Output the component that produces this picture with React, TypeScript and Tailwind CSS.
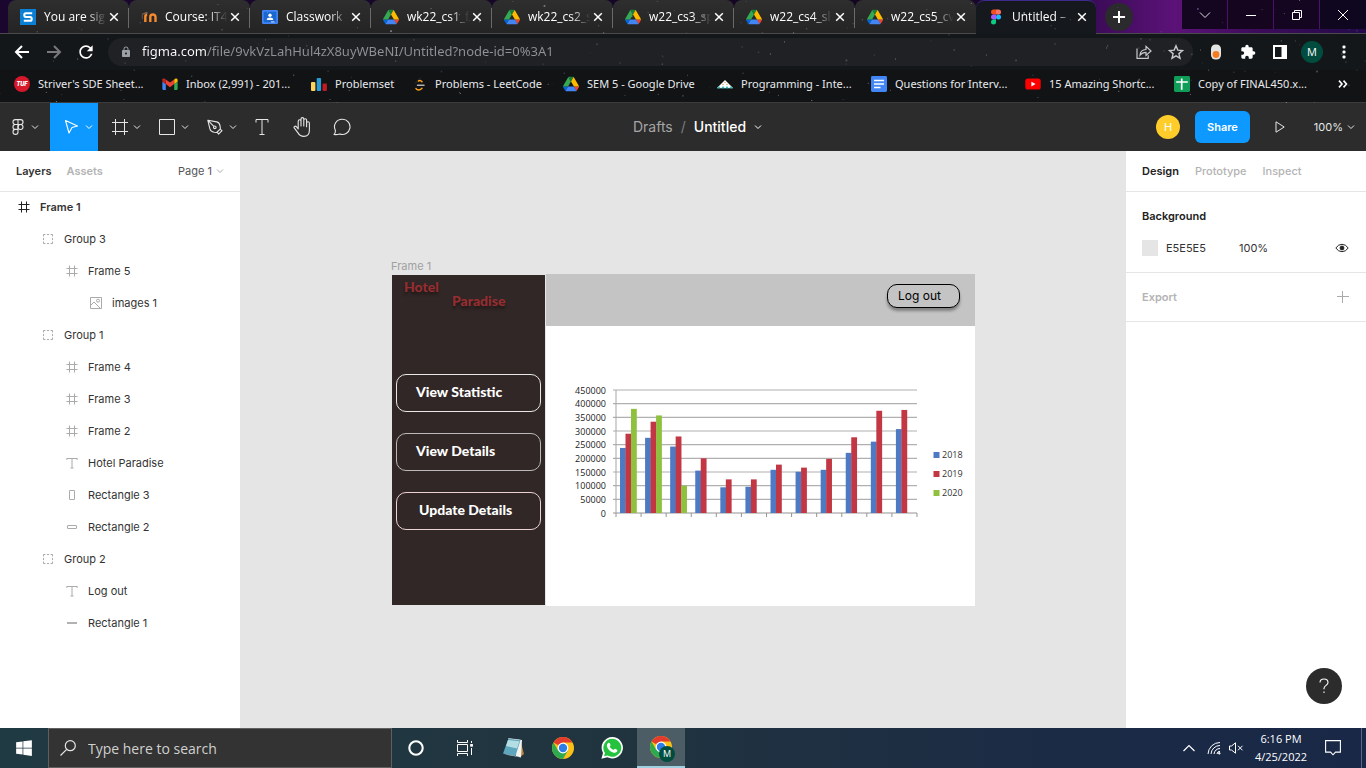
import React from "react";
import { MdExtension, MdLock, MdRefresh } from "react-icons/md";
import { FaWindows } from "react-icons/fa";

type IconProps = { className?: string };

/* ---------- Brand icons ---------- */

function DriveIcon({ className = "h-4 w-4" }: IconProps) {
  return (
    <svg viewBox="0 -4 87.3 86" className={className} aria-hidden="true">
      <path d="m6.6 66.85 3.85 6.65c.8 1.4 1.95 2.5 3.3 3.3l13.75-23.8h-27.5c0 1.55.4 3.1 1.2 4.5z" fill="#0066da" />
      <path d="m43.65 25-13.75-23.8c-1.35.8-2.5 1.9-3.3 3.3l-25.4 44a9.06 9.06 0 0 0-1.2 4.5h27.5z" fill="#34a853" />
      <path d="m73.55 76.8c1.35-.8 2.5-1.9 3.3-3.3l1.6-2.75 7.65-13.25c.8-1.4 1.2-2.95 1.2-4.5h-27.5l5.85 11.5z" fill="#ea4335" />
      <path d="m43.65 25 13.75-23.8c-1.35-.8-2.9-1.2-4.5-1.2h-18.5c-1.6 0-3.15.45-4.5 1.2z" fill="#188038" />
      <path d="m59.8 53h-32.3l-13.75 23.8c1.35.8 2.9 1.2 4.5 1.2h50.8c1.6 0 3.15-.45 4.5-1.2z" fill="#4285f4" />
      <path d="m73.4 26.5-12.7-22c-.8-1.4-1.95-2.5-3.3-3.3l-13.75 23.8 16.15 28h27.45c0-1.55-.4-3.1-1.2-4.5z" fill="#ffba00" />
    </svg>
  );
}

function GmailIcon() {
  return (
    <svg viewBox="50 28 92 92" className="h-4 w-4" aria-hidden="true">
      <path fill="#4285f4" d="M58 108h14V74L52 59v43c0 3.32 2.69 6 6 6" />
      <path fill="#34a853" d="M120 108h14c3.32 0 6-2.69 6-6V59l-20 15" />
      <path fill="#fbbc04" d="M120 48v26l20-15v-8c0-7.42-8.47-11.65-14.4-7.2" />
      <path fill="#ea4335" d="M72 74V48l24 18 24-18v26L96 92" />
      <path fill="#c5221f" d="M52 51v8l20 15V48l-5.6-4.2c-5.94-4.45-14.4-.22-14.4 7.2" />
    </svg>
  );
}

function SquareSIcon() {
  return (
    <svg viewBox="0 0 16 16" className="h-4 w-4" aria-hidden="true">
      <rect width="16" height="16" fill="#0a7fd4" />
      <path d="M12.2 4.2H5.8q-1.5 0-1.5 1.9T5.8 8h4.4q1.5 0 1.5 1.9t-1.5 1.9H3.8" fill="none" stroke="#fff" strokeWidth="2.1" />
    </svg>
  );
}

function MoodleIcon() {
  return (
    <svg viewBox="0 0 16 16" className="h-4 w-4" aria-hidden="true">
      <path d="M.3 5 5.6 2.8l2 1.5L3 5.6z" fill="#7a604e" />
      <path d="M1.3 5.2v5" stroke="#7a604e" strokeWidth=".8" />
      <path d="M4.3 13V7.6q0-1.6 1.8-1.8M9.3 13V8q0-2.5 2.5-2.5T14.5 8v5" fill="none" stroke="#f68a2c" strokeWidth="2.4" />
    </svg>
  );
}

function ClassroomIcon() {
  return (
    <svg viewBox="0 0 16 16" className="h-4 w-4" aria-hidden="true">
      <rect y="1" width="16" height="14" rx="1.2" fill="#4285f4" />
      <rect x="1.7" y="2.7" width="12.6" height="10.6" fill="#1a67d2" />
      <circle cx="8" cy="6.2" r="1.7" fill="#fff" />
      <path d="M4.8 11q0-2.4 3.2-2.4t3.2 2.4z" fill="#fff" />
      <path d="M9 12.4h3.5v1H9z" fill="#dbe8ff" />
    </svg>
  );
}

function FigmaColorIcon() {
  return (
    <svg viewBox="0 0 16 16" className="h-4 w-4" aria-hidden="true">
      <path d="M8 .5H5.5a2.5 2.5 0 0 0 0 5H8z" fill="#f24e1e" />
      <path d="M8 .5h2.5a2.5 2.5 0 0 1 0 5H8z" fill="#ff7262" />
      <path d="M8 5.5H5.5a2.5 2.5 0 0 0 0 5H8z" fill="#a259ff" />
      <circle cx="10.5" cy="8" r="2.5" fill="#1abcfe" />
      <path d="M5.5 10.5H8V13a2.5 2.5 0 1 1-2.5-2.5" fill="#0acf83" />
    </svg>
  );
}

function TufIcon() {
  return (
    <svg viewBox="0 0 16 16" className="h-4 w-4" aria-hidden="true">
      <circle cx="8" cy="8" r="8" fill="#d7182a" />
      <text x="8" y="10" textAnchor="middle" fontSize="5.6" fontWeight="900" fontStyle="italic" fill="#fff" fontFamily="Inter, sans-serif">TUF</text>
    </svg>
  );
}

function CodeforcesIcon() {
  return (
    <svg viewBox="0 0 16 16" className="h-4 w-4" aria-hidden="true">
      <rect y="6" width="4.4" height="9" rx="1" fill="#fbd35a" />
      <rect x="5.7" y="2" width="4.4" height="13" rx="1" fill="#2b9bd3" />
      <rect x="11.5" y="7.5" width="4.4" height="7.5" rx="1" fill="#c01a24" />
    </svg>
  );
}

function LeetCodeIcon() {
  return (
    <svg viewBox="0 0 16 16" className="h-4 w-4" fill="none" strokeWidth="1.5" strokeLinecap="round" aria-hidden="true">
      <path d="M9.5 2 4.3 7.2" stroke="#222" />
      <path d="M5 12.600q1 1.400 2.600 1.500 1.700 0 3.400-1.900M7.500 5q2-1.200 3.500.8" stroke="#ffa116" />
      <path d="M6.500 9.200H13" stroke="#b3b3b3" />
    </svg>
  );
}

function TentsIcon() {
  return (
    <svg viewBox="0 0 16 16" className="h-4 w-4" aria-hidden="true">
      <path d="M8 4 16 12H0z" fill="#fff" />
      <path d="M0 12.6 2 10l2 2.6L6 10l2 2.6L10 10l2 2.6L14 10l2 2.6z" fill="#45b8b8" />
      <path d="m5 9 1-1.6L7 9zM9 9l1-1.6L11 9zM7 7l1-1.5L9 7z" fill="#d6a15c" />
    </svg>
  );
}

function DocsIcon() {
  return (
    <svg viewBox="0 0 16 16" className="h-4 w-4" aria-hidden="true">
      <rect width="16" height="16" rx="1.4" fill="#4285f4" />
      <path d="M3 4.5h10M3 8h10M3 11.5h6.5" stroke="#fff" strokeWidth="1.6" />
    </svg>
  );
}

function YoutubeIcon() {
  return (
    <svg viewBox="0 0 16 16" className="h-4 w-4" aria-hidden="true">
      <rect x=".3" y="2.6" width="15.4" height="11" rx="2.6" fill="#f00" />
      <path d="m6.4 5.8 4.2 2.3-4.2 2.3z" fill="#fff" />
    </svg>
  );
}

function SheetsIcon() {
  return (
    <svg viewBox="0 0 16 16" className="h-4 w-4" aria-hidden="true">
      <rect width="16" height="16" rx="1.4" fill="#0f9d58" />
      <path d="M2.2 6h11.6M7.7 2.5v11.3" stroke="#fff" strokeWidth="1.7" />
    </svg>
  );
}

function ChromeIcon() {
  return (
    <svg viewBox="0 0 24 24" className="h-6 w-6" aria-hidden="true">
      <circle cx="12" cy="12" r="11" fill="#fbc116" />
      <path d="M12 12 2.5 6.5A11 11 0 0 1 21.5 6.5H12z" fill="#e33b2e" />
      <path d="M2.5 6.5A11 11 0 0 0 12 23l4.8-8.2L12 12 7.2 14.8z" fill="#2da94f" />
      <circle cx="12" cy="12" r="5.4" fill="#fff" />
      <circle cx="12" cy="12" r="4.2" fill="#2f7de8" />
    </svg>
  );
}

/* ---------- Browser ---------- */

const STARS = Array.from({ length: 190 }, (_, i) => ({
  x: (i * 367 + ((i * i * 31) % 97)) % 1366,
  y: (i * 53 + ((i * i * 7) % 41)) % 102,
  o: 0.15 + ((i * 17) % 10) / 22,
  s: i % 11 === 0 ? 1.7 : 1,
}));

function StarField() {
  return (
    <svg viewBox="0 0 1366 102" preserveAspectRatio="xMidYMid slice" className="pointer-events-none absolute inset-0 h-full w-full" aria-hidden="true">
      {STARS.map((s, i) => (
        <rect key={i} x={s.x} y={s.y} width={s.s} height={s.s} fill={i % 4 ? "#c9cbd8" : "#8c84c8"} opacity={s.o} />
      ))}
    </svg>
  );
}

const TABS: { title: string; icon: React.ReactNode }[] = [
  { title: "You are sig", icon: <SquareSIcon /> },
  { title: "Course: IT4", icon: <MoodleIcon /> },
  { title: "Classwork", icon: <ClassroomIcon /> },
  { title: "wk22_cs1_f", icon: <DriveIcon /> },
  { title: "wk22_cs2_s", icon: <DriveIcon /> },
  { title: "w22_cs3_sp", icon: <DriveIcon /> },
  { title: "w22_cs4_sl", icon: <DriveIcon /> },
  { title: "w22_cs5_cv", icon: <DriveIcon /> },
  { title: "Untitled –", icon: <FigmaColorIcon /> },
];

function CloseX({ className = "h-2.5 w-2.5" }: IconProps) {
  return (
    <svg viewBox="0 0 10 10" className={className} aria-hidden="true">
      <path d="m1.2 1.2 7.6 7.6m0-7.6L1.2 8.8" stroke="#fff" strokeWidth="1.5" />
    </svg>
  );
}

function TabStrip() {
  return (
    <div className="flex h-[34px] border-b border-[#4a4a4c] bg-[linear-gradient(to_right,#1b0630,#12061f_70%,#3a0b57_80%,#5c1278_86%,#3d0c5c_92%,#240a4a)]">
      <div className="flex pl-2">
        {TABS.map((tab, i) => {
          const active = i === TABS.length - 1;
          return (
            <div
              key={tab.title}
              className={
                active
                  ? "relative flex h-[34px] w-[120px] items-center rounded-t-lg border-t border-[#3d2a8c] bg-[#15181c] pb-0.5 pl-3"
                  : "relative flex h-[33px] w-[121px] items-center rounded-t-lg bg-[linear-gradient(to_bottom,#2e2e2f,#242424)] pl-3"
              }
            >
              {tab.icon}
              <button className="ml-2 w-[65px] whitespace-nowrap text-left text-xs text-white [mask-image:linear-gradient(to_right,#000_66%,transparent_96%)]">
                {tab.title}
              </button>
              <button aria-label={`Close ${tab.title}`} className="flex">
                <CloseX />
              </button>
              {i < TABS.length - 2 && <span className="absolute right-0 top-2 h-5 w-px bg-[#6a6a6c]" />}
            </div>
          );
        })}
      </div>
      <button aria-label="New tab" className="mt-[3px] ml-[9px] flex h-7 w-7 items-center justify-center rounded-full bg-[#2b2a2d]">
        <svg viewBox="0 0 12 12" className="h-3 w-3" aria-hidden="true">
          <path d="M6 0v12M0 6h12" stroke="#fff" strokeWidth="2" />
        </svg>
      </button>
      <div className="ml-auto flex h-[29px] gap-px bg-[#4d1266]">
        <button aria-label="Search tabs" className="flex w-[45px] items-center justify-center bg-[#140620]">
          <svg viewBox="0 0 12 12" className="h-3 w-3" fill="none" stroke="#ddd" aria-hidden="true"><path d="m1 3.5 5 5 5-5" /></svg>
        </button>
        <button aria-label="Minimize" className="flex w-[45px] items-center justify-center bg-[#16051f]">
          <svg viewBox="0 0 10 10" className="h-2.5 w-2.5" aria-hidden="true"><path d="M0 5.5h10" stroke="#fff" /></svg>
        </button>
        <button aria-label="Restore" className="flex w-[45px] items-center justify-center bg-[#140620]">
          <svg viewBox="0 0 10 10" className="h-2.5 w-2.5" fill="none" stroke="#fff" aria-hidden="true">
            <path d="M.5 2.5h7v7h-7zM2.5 2.5v-2h7v7h-2" />
          </svg>
        </button>
        <button aria-label="Close" className="flex w-[46px] items-center justify-center bg-[#0f0720]">
          <svg viewBox="0 0 10 10" className="h-2.5 w-2.5" aria-hidden="true"><path d="m0 0 10 10M10 0 0 10" stroke="#fff" /></svg>
        </button>
      </div>
    </div>
  );
}

function AddressBar() {
  return (
    <div className="flex h-9 items-center bg-[#14171a]">
      <button aria-label="Back" className="ml-3 flex w-5 justify-center">
        <svg viewBox="0 0 16 14" className="h-3.5 w-4" fill="none" stroke="#fff" strokeWidth="2" aria-hidden="true"><path d="M15 7H2m6-6L2 7l6 6" /></svg>
      </button>
      <button aria-label="Forward" className="ml-3 flex w-5 justify-center">
        <svg viewBox="0 0 16 14" className="h-3.5 w-4" fill="none" stroke="#77797c" strokeWidth="2" aria-hidden="true"><path d="M1 7h13M8 1l6 6-6 6" /></svg>
      </button>
      <button aria-label="Reload" className="ml-3 flex w-5 justify-center">
        <MdRefresh className="h-5 w-5 shrink-0 text-white" />
      </button>
      <div className="ml-3 flex h-7 flex-1 items-center rounded-full bg-[#202124] pl-3">
        <MdLock className="h-3 w-3 shrink-0 text-[#9aa0a6]" />
        <input
          aria-label="Address"
          readOnly
          value="figma.com/file/9vkVzLahHul4zX8uyWBeNI/Untitled?node-id=0%3A1"
          className="ml-2.5 min-w-0 flex-1 bg-[linear-gradient(to_right,#fff_65px,#8f9297_65px)] bg-clip-text font-['Noto_Sans',sans-serif] text-[13px] text-transparent outline-none"
        />
        <button aria-label="Share this page" className="flex w-8 justify-center">
          <svg viewBox="0 0 16 16" className="h-4 w-4" fill="none" stroke="#c8c9cb" strokeWidth="1.2" aria-hidden="true">
            <path d="M1 4.5v9.8h11.2v-3M4 11.2c.3-3.8 2.6-5.6 6-5.7V2.3L15 7l-5 4.5V8.3c-2.6 0-4.4.8-6 2.9z" />
          </svg>
        </button>
        <button aria-label="Bookmark" className="mr-px flex w-8 justify-center">
          <svg viewBox="0 0 16 16" className="h-4 w-4" fill="none" stroke="#c8c9cb" strokeWidth="1.4" aria-hidden="true">
            <path d="m8 1.8 1.8 4.3 4.7.4-3.6 3.1 1.1 4.6L8 11.8l-4 2.4 1.1-4.6L1.500 6.500l4.7-.4z" />
          </svg>
        </button>
      </div>
      <div className="ml-[7px] mr-1.5 flex">
        <button aria-label="Extension" className="flex h-8 w-8 items-center justify-center">
          <svg viewBox="0 0 12 16" className="h-4 w-3" aria-hidden="true">
            <rect x="1" y=".5" width="10" height="15" rx="4.5" fill="#e4e4e2" />
            <circle cx="6" cy="10.500" r="3.4" fill="#f47b20" />
          </svg>
        </button>
        <button aria-label="Extensions" className="flex h-8 w-8 items-center justify-center"><MdExtension className="h-4 w-4 text-white" /></button>
        <button aria-label="Side panel" className="flex h-8 w-8 items-center justify-center">
          <svg viewBox="0 0 14 14" className="h-3.5 w-3.5" aria-hidden="true"><path d="M0 0h14v14H0z" fill="#fff" /><path d="M2 2h6.500v10H2z" fill="#14171a" /></svg>
        </button>
        <button aria-label="Profile" className="flex h-8 w-8 items-center justify-center">
          <span className="flex h-[22px] w-[22px] items-center justify-center rounded-full bg-[#004d40] text-[11px] text-white">M</span>
        </button>
        <button aria-label="Menu" className="flex h-8 w-8 items-center justify-center">
          <svg viewBox="0 0 4 14" className="h-3.5 w-1" fill="#fff" aria-hidden="true"><rect x=".5" y=".5" width="3" height="3" rx="1" /><rect x=".5" y="5.500" width="3" height="3" rx="1" /><rect x=".5" y="10.500" width="3" height="3" rx="1" /></svg>
        </button>
      </div>
    </div>
  );
}

const BOOKMARKS: { label: string; icon: React.ReactNode; width: string }[] = [
  { label: "Striver's SDE Sheet...", icon: <TufIcon />, width: "w-[148px]" },
  { label: "Inbox (2,991) - 201...", icon: <GmailIcon />, width: "w-[149px]" },
  { label: "Problemset", icon: <CodeforcesIcon />, width: "w-[100px]" },
  { label: "Problems - LeetCode", icon: <LeetCodeIcon />, width: "w-[152px]" },
  { label: "SEM 5 - Google Drive", icon: <DriveIcon />, width: "w-[154px]" },
  { label: "Programming - Inte...", icon: <TentsIcon />, width: "w-[154px]" },
  { label: "Questions for Interv...", icon: <DocsIcon />, width: "w-[154px]" },
  { label: "15 Amazing Shortc...", icon: <YoutubeIcon />, width: "w-[149px]" },
  { label: "Copy of FINAL450.x...", icon: <SheetsIcon />, width: "w-[149px]" },
];

function BookmarksBar() {
  return (
    <nav aria-label="Bookmarks" className="flex h-[33px] items-center border-b border-[#3c3c3d] bg-[#111315] pb-1 pl-3.5 pr-[18px] font-['Noto_Sans',sans-serif]">
      {BOOKMARKS.map((b) => (
        <a key={b.label} href="#" className={`${b.width} flex shrink-0 items-center gap-2 whitespace-nowrap text-[11px] leading-4 text-[#e8eaed]`}>
          {b.icon}
          {b.label}
        </a>
      ))}
      <button aria-label="More bookmarks" className="ml-auto flex">
        <svg viewBox="0 0 10 8" className="h-2 w-2.5" fill="none" stroke="#fff" strokeWidth="1.6" aria-hidden="true"><path d="m1 .6 3 3.400-3 3.400M5.500.6l3 3.400-3 3.400" /></svg>
      </button>
    </nav>
  );
}

/* ---------- Editor toolbar ---------- */

function Chevron({ className = "h-2 w-2" }: IconProps) {
  return (
    <svg viewBox="0 0 8 8" className={className} fill="none" stroke="currentColor" aria-hidden="true">
      <path d="M1 2.500 4 5.500 7 2.500" />
    </svg>
  );
}

function Toolbar() {
  return (
    <header className="flex h-12 items-center bg-[#2c2c2c] text-[#e6e6e6]">
      <div className="flex h-full flex-1">
        <button aria-label="Main menu" className="flex w-[50px] items-center gap-[7px] pl-3">
          <svg viewBox="0 0 12 16" className="h-4 w-3" fill="none" stroke="currentColor" strokeWidth="1.1" aria-hidden="true">
            <path d="M6 .6H3.400a2.400 2.400 0 0 0 0 4.900H6zM6 .6h2.600a2.400 2.400 0 0 1 0 4.900H6zM6 5.500H3.400a2.400 2.400 0 0 0 0 4.900H6zM6 10.400H3.400A2.500 2.500 0 1 0 6 12.900z" />
            <circle cx="8.500" cy="8" r="2.500" />
          </svg>
          <Chevron />
        </button>
        <button aria-label="Move" className="flex w-12 items-center gap-[5px] bg-[#0d99ff] pl-3.5 text-white">
          <svg viewBox="0 0 16 16" className="h-4 w-4" fill="none" stroke="currentColor" strokeWidth="1.100" strokeLinejoin="round" aria-hidden="true">
            <path d="m1.500 1.500 12 5.500-5.500 1.500-3 5.500z" />
          </svg>
          <Chevron />
        </button>
        <button aria-label="Frame" className="flex w-12 items-center gap-[5px] pl-3.5">
          <svg viewBox="0 0 16 16" className="h-4 w-4" fill="none" stroke="currentColor" aria-hidden="true"><path d="M3.500 0v16M12.500 0v16M0 3.500h16M0 12.500h16" /></svg>
          <Chevron />
        </button>
        <button aria-label="Rectangle" className="flex w-12 items-center gap-1.5 pl-[13px]">
          <svg viewBox="0 0 16 16" className="h-4 w-4" fill="none" stroke="currentColor" aria-hidden="true"><path d="M.5.5h15v15H.5z" /></svg>
          <Chevron />
        </button>
        <button aria-label="Pen" className="flex w-12 items-center gap-1.5 pl-[13px]">
          <svg viewBox="0 0 16 16" className="h-4 w-4" fill="none" stroke="currentColor" strokeWidth="1.100" strokeLinejoin="round" aria-hidden="true">
            <path d="m.8 1.200 9 1.700c1.800.4 3 2.300 3.300 4.300l.3 2.700-3.700 3.600-2.600-.3c-2-.3-3.700-1.500-4.200-3.300zm0 0 6 6.200" />
            <circle cx="7.800" cy="8.300" r="1.300" />
            <path d="m10.300 13.400 1.300 1.700 3.400-3.400-1.600-1.400" />
          </svg>
          <Chevron />
        </button>
        <button aria-label="Text" className="flex w-10 items-center justify-center">
          <svg viewBox="0 0 14 16" className="h-4 w-3.5" fill="none" stroke="currentColor" aria-hidden="true"><path d="M1 3.500v-3h12v3M7 .5v15M4.500 15.500h5" /></svg>
        </button>
        <button aria-label="Hand" className="flex w-10 items-center justify-center">
          <svg viewBox="0 0 18 20" className="h-5 w-[18px]" fill="none" stroke="currentColor" strokeWidth="1.100" strokeLinecap="round" strokeLinejoin="round" aria-hidden="true">
            <path d="M5.200 10.500V4.200a1.400 1.400 0 0 1 2.800 0V9V2a1.400 1.400 0 0 1 2.800 0v7V3.200a1.400 1.400 0 0 1 2.800 0v6.500V6.200a1.400 1.400 0 0 1 2.800 0v7c0 3.600-2.100 6.200-5.600 6.200-2.900 0-4.400-1.200-5.800-3.500L1.200 10.800c-.6-1 1.100-2.300 2.200-1.100l1.800 2.300z" />
          </svg>
        </button>
        <button aria-label="Comment" className="flex w-10 items-center justify-center">
          <svg viewBox="0 0 18 18" className="h-[18px] w-[18px]" fill="none" stroke="currentColor" strokeWidth="1.100" strokeLinejoin="round" aria-hidden="true">
            <path d="M9.300 1.200a7.600 7.600 0 1 1-2.600 14.700q-2.500.9-5.700.6c1.400-1.200 1.600-2.200 1.300-4.300A7.600 7.600 0 0 1 9.300 1.200z" />
          </svg>
        </button>
      </div>
      <div className="flex items-center gap-2 pl-10 text-sm">
        <a href="#" className="text-[#a5a5a5]">Drafts</a>
        <span aria-hidden="true" className="text-[#7d7d7d]">/</span>
        <button className="flex items-center gap-2 font-medium text-white">Untitled<Chevron /></button>
      </div>
      <div className="flex flex-1 items-center justify-end pr-[11px]">
        <span className="flex h-6 w-6 items-center justify-center rounded-full bg-[#ffcd29] text-[11px] text-white">H</span>
        <button className="ml-[15px] h-8 rounded-md bg-[#0d99ff] px-3 text-[11px] font-semibold text-white">Share</button>
        <button aria-label="Present" className="ml-[25px] flex">
          <svg viewBox="0 0 10 12" className="h-3 w-2.5" fill="none" stroke="currentColor" strokeLinejoin="round" aria-hidden="true"><path d="M1 .8v10.400L9.200 6z" /></svg>
        </button>
        <button className="ml-[29px] flex items-center gap-1 text-[11px]">100%<Chevron /></button>
      </div>
    </header>
  );
}

/* ---------- Layers ---------- */

type Kind = "frame" | "group" | "image" | "text" | "tall" | "wide" | "line";

function LayerIcon({ kind }: { kind: Kind }) {
  return (
    <svg viewBox="0 0 12 12" className="h-3 w-3" fill="none" stroke="currentColor" aria-hidden="true">
      {kind === "frame" && <path d="M3.500.5v11M8.500.5v11M.5 3.500h11M.5 8.500h11" />}
      {kind === "group" && <path d="M1.500 3.500v-2h2m1.500 0h2m1.500 0h2v2m0 1.500v2m0 1.500v2h-2m-1.500 0H5m-1.500 0h-2v-2m0-1.500V5" />}
      {kind === "image" && <><path d="M.5.500h11v11H.5zM1 8l3-3 6.500 6.500" /><circle cx="8" cy="3.700" r="1.500" /></>}
      {kind === "text" && <path d="M.8 3V1.500h10.400V3M6 1.500v9.500M4.500 11h3" />}
      {kind === "tall" && <rect x="3.500" y="1.500" width="5" height="9" rx=".3" />}
      {kind === "wide" && <rect x="1.500" y="4.500" width="9" height="3" rx=".3" />}
      {kind === "line" && <path d="M1 6h10" strokeWidth="1.800" />}
    </svg>
  );
}

const INDENT = ["pl-[18px]", "pl-[42px]", "pl-[66px]", "pl-[90px]"];

const LAYERS: { name: string; kind: Kind; depth: number }[] = [
  { name: "Frame 1", kind: "frame", depth: 0 },
  { name: "Group 3", kind: "group", depth: 1 },
  { name: "Frame 5", kind: "frame", depth: 2 },
  { name: "images 1", kind: "image", depth: 3 },
  { name: "Group 1", kind: "group", depth: 1 },
  { name: "Frame 4", kind: "frame", depth: 2 },
  { name: "Frame 3", kind: "frame", depth: 2 },
  { name: "Frame 2", kind: "frame", depth: 2 },
  { name: "Hotel Paradise", kind: "text", depth: 2 },
  { name: "Rectangle 3", kind: "tall", depth: 2 },
  { name: "Rectangle 2", kind: "wide", depth: 2 },
  { name: "Group 2", kind: "group", depth: 1 },
  { name: "Log out", kind: "text", depth: 2 },
  { name: "Rectangle 1", kind: "line", depth: 2 },
];

function LayersPanel() {
  return (
    <aside className="w-60 shrink-0 bg-white text-[11px] text-[#333]">
      <div className="flex h-10 items-center px-4 shadow-[0_1px_0_#e5e5e5]">
        <button className="font-semibold">Layers</button>
        <button className="ml-[15px] font-semibold text-[#b3b3b3]">Assets</button>
        <button className="ml-auto flex items-center gap-1 text-[#555]">Page 1<Chevron className="h-2 w-2 text-[#aaa]" /></button>
      </div>
      <ul>
        {LAYERS.map((l) => (
          <li key={l.name} className={`${INDENT[l.depth]} flex h-8 items-center gap-2.5`}>
            <span className={l.depth === 0 ? "text-[#222]" : "text-[#aaa]"}><LayerIcon kind={l.kind} /></span>
            <span className={l.depth === 0 ? "font-semibold" : ""}>{l.name}</span>
          </li>
        ))}
      </ul>
    </aside>
  );
}

/* ---------- Canvas ---------- */

const SERIES = [
  { name: "2018", color: "#4e7ac4", values: [238, 275, 243, 155, 94, 96, 158, 151, 158, 220, 261, 307] },
  { name: "2019", color: "#c23743", values: [290, 334, 280, 200, 123, 123, 177, 166, 198, 277, 374, 377] },
  { name: "2020", color: "#8fc13e", values: [381, 357, 100] },
];
const AXIS_TOP = 6;
const AXIS_BOTTOM = 129;
const AXIS_LEFT = 44;
const AXIS_RIGHT = 345;
const yFor = (v: number) => AXIS_BOTTOM - (v / 450) * (AXIS_BOTTOM - AXIS_TOP);
const STEP = (AXIS_RIGHT - AXIS_LEFT) / 12;

function StatisticsChart() {
  const ticks = Array.from({ length: 10 }, (_, i) => i * 50);
  return (
    <svg viewBox="0 0 396 140" className="h-[140px] w-[396px]" role="img" aria-label="Statistics by year" fontFamily="'Open Sans', sans-serif" fontWeight="500">
      {ticks.map((t) => (
        <g key={t}>
          <path d={`M${AXIS_LEFT - 3} ${yFor(t)}H${AXIS_RIGHT}`} stroke={t === 0 ? "#949494" : "#b0b0b0"} strokeWidth="1.200" />
          <text x="34" y={yFor(t) + 3.500} textAnchor="end" fontSize="9" fill="#222">{t * 1000}</text>
        </g>
      ))}
      {SERIES.map((s, k) =>
        s.values.map((v, i) => (
          <rect key={`${s.name}-${i}`} x={AXIS_LEFT + i * STEP + 4 + k * 5.500} y={yFor(v)} width="5.800" height={AXIS_BOTTOM - yFor(v)} fill={s.color} />
        )),
      )}
      <path d={`M${AXIS_LEFT} ${AXIS_TOP}V${AXIS_BOTTOM}`} stroke="#a5a5a5" />
      {Array.from({ length: 13 }, (_, i) => (
        <path key={i} d={`M${AXIS_LEFT + i * STEP} ${AXIS_BOTTOM}v4`} stroke="#949494" />
      ))}
      {SERIES.map((s, k) => (
        <g key={s.name}>
          <rect x="361.500" y={68 + k * 19} width="6" height="6" fill={s.color} />
          <text x="370" y={74 + k * 19} fontSize="9" fill="#333">{s.name}</text>
        </g>
      ))}
    </svg>
  );
}

function Artboard() {
  return (
    <div className="relative flex h-[332px] w-[584px] pl-px">
      <span className="absolute -top-4 left-0 text-[11px] leading-4 text-[#a0a0a0]">Frame 1</span>
      <div className="my-px mr-px flex w-[153px] flex-col bg-[#312726] font-['Lato',sans-serif] font-black">
        <p className="pl-3 pt-[5px] text-sm leading-[14px] text-[#962d30] [text-shadow:0_3px_3px_rgba(0,0,0,0.4)]">
          Hotel<br /><span className="pl-12">Paradise</span>
        </p>
        <div className="mt-[66px] flex flex-col gap-[21px] px-1 text-sm text-white">
          <button className="h-[38px] rounded-[10px] border border-[#e8e8e8] pb-0.5 pl-[19px] text-left">View Statistic</button>
          <button className="h-[38px] rounded-[10px] border border-[#b9b9b9] pb-0.5 pl-[19px] text-left">View Details</button>
          <button className="h-[38px] rounded-[10px] border border-[#ecd2d2] pb-0.5 pl-[22px] text-left">Update Details</button>
        </div>
      </div>
      <div className="flex flex-1 flex-col bg-white">
        <div className="flex h-[52px] items-start justify-end bg-[#c4c4c4] pr-[15px] pt-2.5">
          <button className="h-6 w-[73px] rounded-[10px] border border-black bg-[#c4c4c4] pl-2.5 text-left text-xs text-black shadow-[0_3px_3px_rgba(0,0,0,0.35)]">Log out</button>
        </div>
        <div className="pl-[26px] pt-[58px]">
          <StatisticsChart />
        </div>
      </div>
    </div>
  );
}

/* ---------- Inspector ---------- */

function DesignPanel() {
  return (
    <aside className="relative w-60 shrink-0 bg-white text-[11px] text-[#333]">
      <div className="flex h-10 items-center gap-4 px-4 font-semibold text-[#b3b3b3] shadow-[0_1px_0_#e5e5e5]">
        <button className="text-[#222]">Design</button>
        <button className="font-medium">Prototype</button>
        <button className="font-medium">Inspect</button>
      </div>
      <section className="border-b border-[#e5e5e5] pb-2 pl-4 pr-[17px] pt-[9px]">
        <h2 className="flex h-8 items-center font-semibold text-[#222]">Background</h2>
        <div className="flex h-8 items-center">
          <span className="h-4 w-4 bg-[#e5e5e5]" />
          <input aria-label="Background colour" defaultValue="E5E5E5" className="ml-2 w-[73px] outline-none" />
          <input aria-label="Background opacity" defaultValue="100%" className="w-10 outline-none" />
          <button aria-label="Toggle visibility" className="ml-auto flex">
            <svg viewBox="0 0 14 10" className="h-2.5 w-3.5" fill="none" stroke="#222" aria-hidden="true">
              <path d="M.8 5Q3.300 1.300 7 1.300T13.200 5Q10.700 8.700 7 8.700T.8 5z" />
              <circle cx="7" cy="5" r="1.900" fill="#222" />
            </svg>
          </button>
        </div>
      </section>
      <section className="flex h-[49px] items-center justify-between border-b border-[#e5e5e5] pl-4 pr-[17px] font-semibold text-[#b3b3b3]">
        <h2>Export</h2>
        <button aria-label="Add export" className="flex">
          <svg viewBox="0 0 12 12" className="h-3 w-3" stroke="#aaa" aria-hidden="true"><path d="M5.500 0v12M0 5.500h12" /></svg>
        </button>
      </section>
      <button aria-label="Help" className="absolute bottom-6 right-6 flex h-9 w-9 items-center justify-center rounded-full bg-[#2c2c2c]">
        <svg viewBox="0 0 10 16" className="h-4 w-2.5" fill="none" stroke="#fff" strokeWidth="1.100" aria-hidden="true">
          <path d="M1 4.500C1 2.300 2.700 1 5 1s4 1.400 4 3.500C9 7.500 5 7.300 5 10.500v.7M5 13.500V15" />
        </svg>
      </button>
    </aside>
  );
}

/* ---------- Taskbar ---------- */

function Taskbar() {
  return (
    <footer className="flex h-10 bg-[linear-gradient(to_right,#203a43,#20343f_45%,#1b2a45_80%,#182846)] font-['Open_Sans',sans-serif] text-white">
      <button aria-label="Start" className="flex w-12 items-center justify-center"><FaWindows className="h-[18px] w-4" /></button>
      <label className="flex w-[344px] items-center border border-[#606060] bg-[#333] pl-[11px]">
        <svg viewBox="0 0 16 16" className="h-4 w-4 shrink-0" fill="none" stroke="#e6e6e6" strokeWidth="1.200" aria-hidden="true">
          <circle cx="10.300" cy="5.700" r="5" /><path d="M6.700 9.300.5 15.500" />
        </svg>
        <input placeholder="Type here to search" aria-label="Search" className="ml-3 min-w-0 flex-1 bg-transparent pt-px text-sm outline-none placeholder:text-[#d0d0d0]" />
      </label>
      <div className="flex gap-px">
        <button aria-label="Cortana" className="flex w-12 items-center justify-center">
          <svg viewBox="0 0 16 16" className="h-4 w-4" aria-hidden="true"><circle cx="8" cy="8" r="6.700" fill="none" stroke="#fff" strokeWidth="2.100" /></svg>
        </button>
        <button aria-label="Task view" className="flex w-12 items-center justify-center">
          <svg viewBox="0 0 17 16" className="h-4 w-[17px]" fill="none" stroke="#fff" aria-hidden="true">
            <path d="M.5 0v2.500h10V0M.5 4.500h10v7H.5zM.5 16v-2.500h10V16M14.500 1v2m0 5v7" />
            <path d="M13.200 4h2.700v2.700h-2.700z" fill="#fff" stroke="none" />
          </svg>
        </button>
        <button aria-label="Notepad" className="flex w-12 items-center justify-center">
          <svg viewBox="0 0 24 24" className="h-6 w-6" aria-hidden="true">
            <path d="m18 3 4 15-4 3z" fill="#b8853f" />
            <path d="M7 2.500 20 4l-1 17.500L14 20z" fill="#f2f2ef" />
            <path d="M6.500 2.500 18.500 4 13.500 20 1 17.500z" fill="#5da6bd" />
            <path d="m6 4 11.500 1.300-2.400 7.200L4 10z" fill="#b4dde4" />
            <path d="m6.500 2.500 12 1.500" stroke="#e8e8e8" strokeDasharray="1 1" />
            <path d="m1 17.500 12.500 2.500 5.500 1.500-13-2.500z" fill="#dfeef2" />
          </svg>
        </button>
        <button aria-label="Chrome" className="flex w-12 items-center justify-center"><ChromeIcon /></button>
        <button aria-label="WhatsApp" className="flex w-12 items-center justify-center">
          <svg viewBox="0 0 24 24" className="h-6 w-6" aria-hidden="true">
            <path d="M12.300 1a10.700 10.700 0 1 1-5 20.200L1.400 22.700 3 17A10.700 10.700 0 0 1 12.300 1z" fill="#fff" />
            <path d="M12.300 2.800a9 9 0 1 1-4.700 16.700L4 20.300l1-3.400A9 9 0 0 1 12.300 2.800z" fill="#25c23e" />
            <path d="M8.700 6.800c.6-.2.900 0 1.100.5l.7 1.700c.2.500-.5 1-.8 1.500.9 1.700 2 2.700 3.800 3.400.6-.5 1-1.400 1.500-1.200l2 1c.5.300.3 1.400-.1 2-.9 1-2.500 1.200-3.900.7-3-1-5.200-3.200-6-5.700-.5-1.600.4-3.500 1.700-3.900z" fill="#fff" />
          </svg>
        </button>
        <button aria-label="Chrome, profile M" className="relative flex w-12 items-center justify-center border-b-2 border-[#9fd0e0] bg-[#4c5d66]">
          <ChromeIcon />
          <span className="absolute bottom-1 right-2.5 flex h-4 w-4 items-center justify-center rounded-full bg-[#004d40] text-[9px]">M</span>
        </button>
      </div>
      <div className="ml-auto flex items-center">
        <button aria-label="Show hidden icons" className="flex">
          <svg viewBox="0 0 12 8" className="h-2 w-3" fill="none" stroke="#fff" strokeWidth="1.200" aria-hidden="true"><path d="m.5 7 5.500-5.500L11.500 7" /></svg>
        </button>
        <button aria-label="Network" className="ml-3 flex">
          <svg viewBox="0 0 14 14" className="h-3.5 w-3.5" fill="none" stroke="#fff" aria-hidden="true">
            <path d="M1 13A12 12 0 0 1 13 1.500M4 13a9 9 0 0 1 9-8.500M7 13a6 6 0 0 1 6-5.500M10 13a3 3 0 0 1 3-2.700" />
            <circle cx="12.300" cy="12.300" r=".8" fill="#fff" />
          </svg>
        </button>
        <button aria-label="Volume muted" className="ml-2 flex">
          <svg viewBox="0 0 15 12" className="h-3 w-[15px]" fill="none" stroke="#fff" aria-hidden="true">
            <path d="M.5 4h2L6.500.8v10.400L2.500 8h-2zM9 3.800l4.500 4.500m0-4.500L9 8.300" />
          </svg>
        </button>
        <time className="ml-2.5 w-[54px] whitespace-nowrap text-center text-[11px] leading-[18px]">6:16 PM<br />4/25/2022</time>
        <button aria-label="Notifications" className="ml-[17px] flex">
          <svg viewBox="0 0 16 16" className="h-4 w-4" fill="none" stroke="#fff" strokeWidth="1.100" aria-hidden="true"><path d="M.6.600h14.800v11.500H10.500L8 14.800 5.500 12.100H.6z" /></svg>
        </button>
        <span className="ml-5 mr-1 h-10 w-px bg-[#5a6682]" />
      </div>
    </footer>
  );
}

export default function App() {
  return (
    <div className="flex min-h-screen flex-col bg-[#e5e5e5] font-['Inter',sans-serif]">
      <div className="relative font-['Open_Sans',sans-serif]">
        <TabStrip />
        <AddressBar />
        <BookmarksBar />
        <StarField />
      </div>
      <Toolbar />
      <main className="flex flex-1">
        <LayersPanel />
        <div className="flex min-w-0 flex-1 items-center justify-center">
          <Artboard />
        </div>
        <DesignPanel />
      </main>
      <Taskbar />
    </div>
  );
}
